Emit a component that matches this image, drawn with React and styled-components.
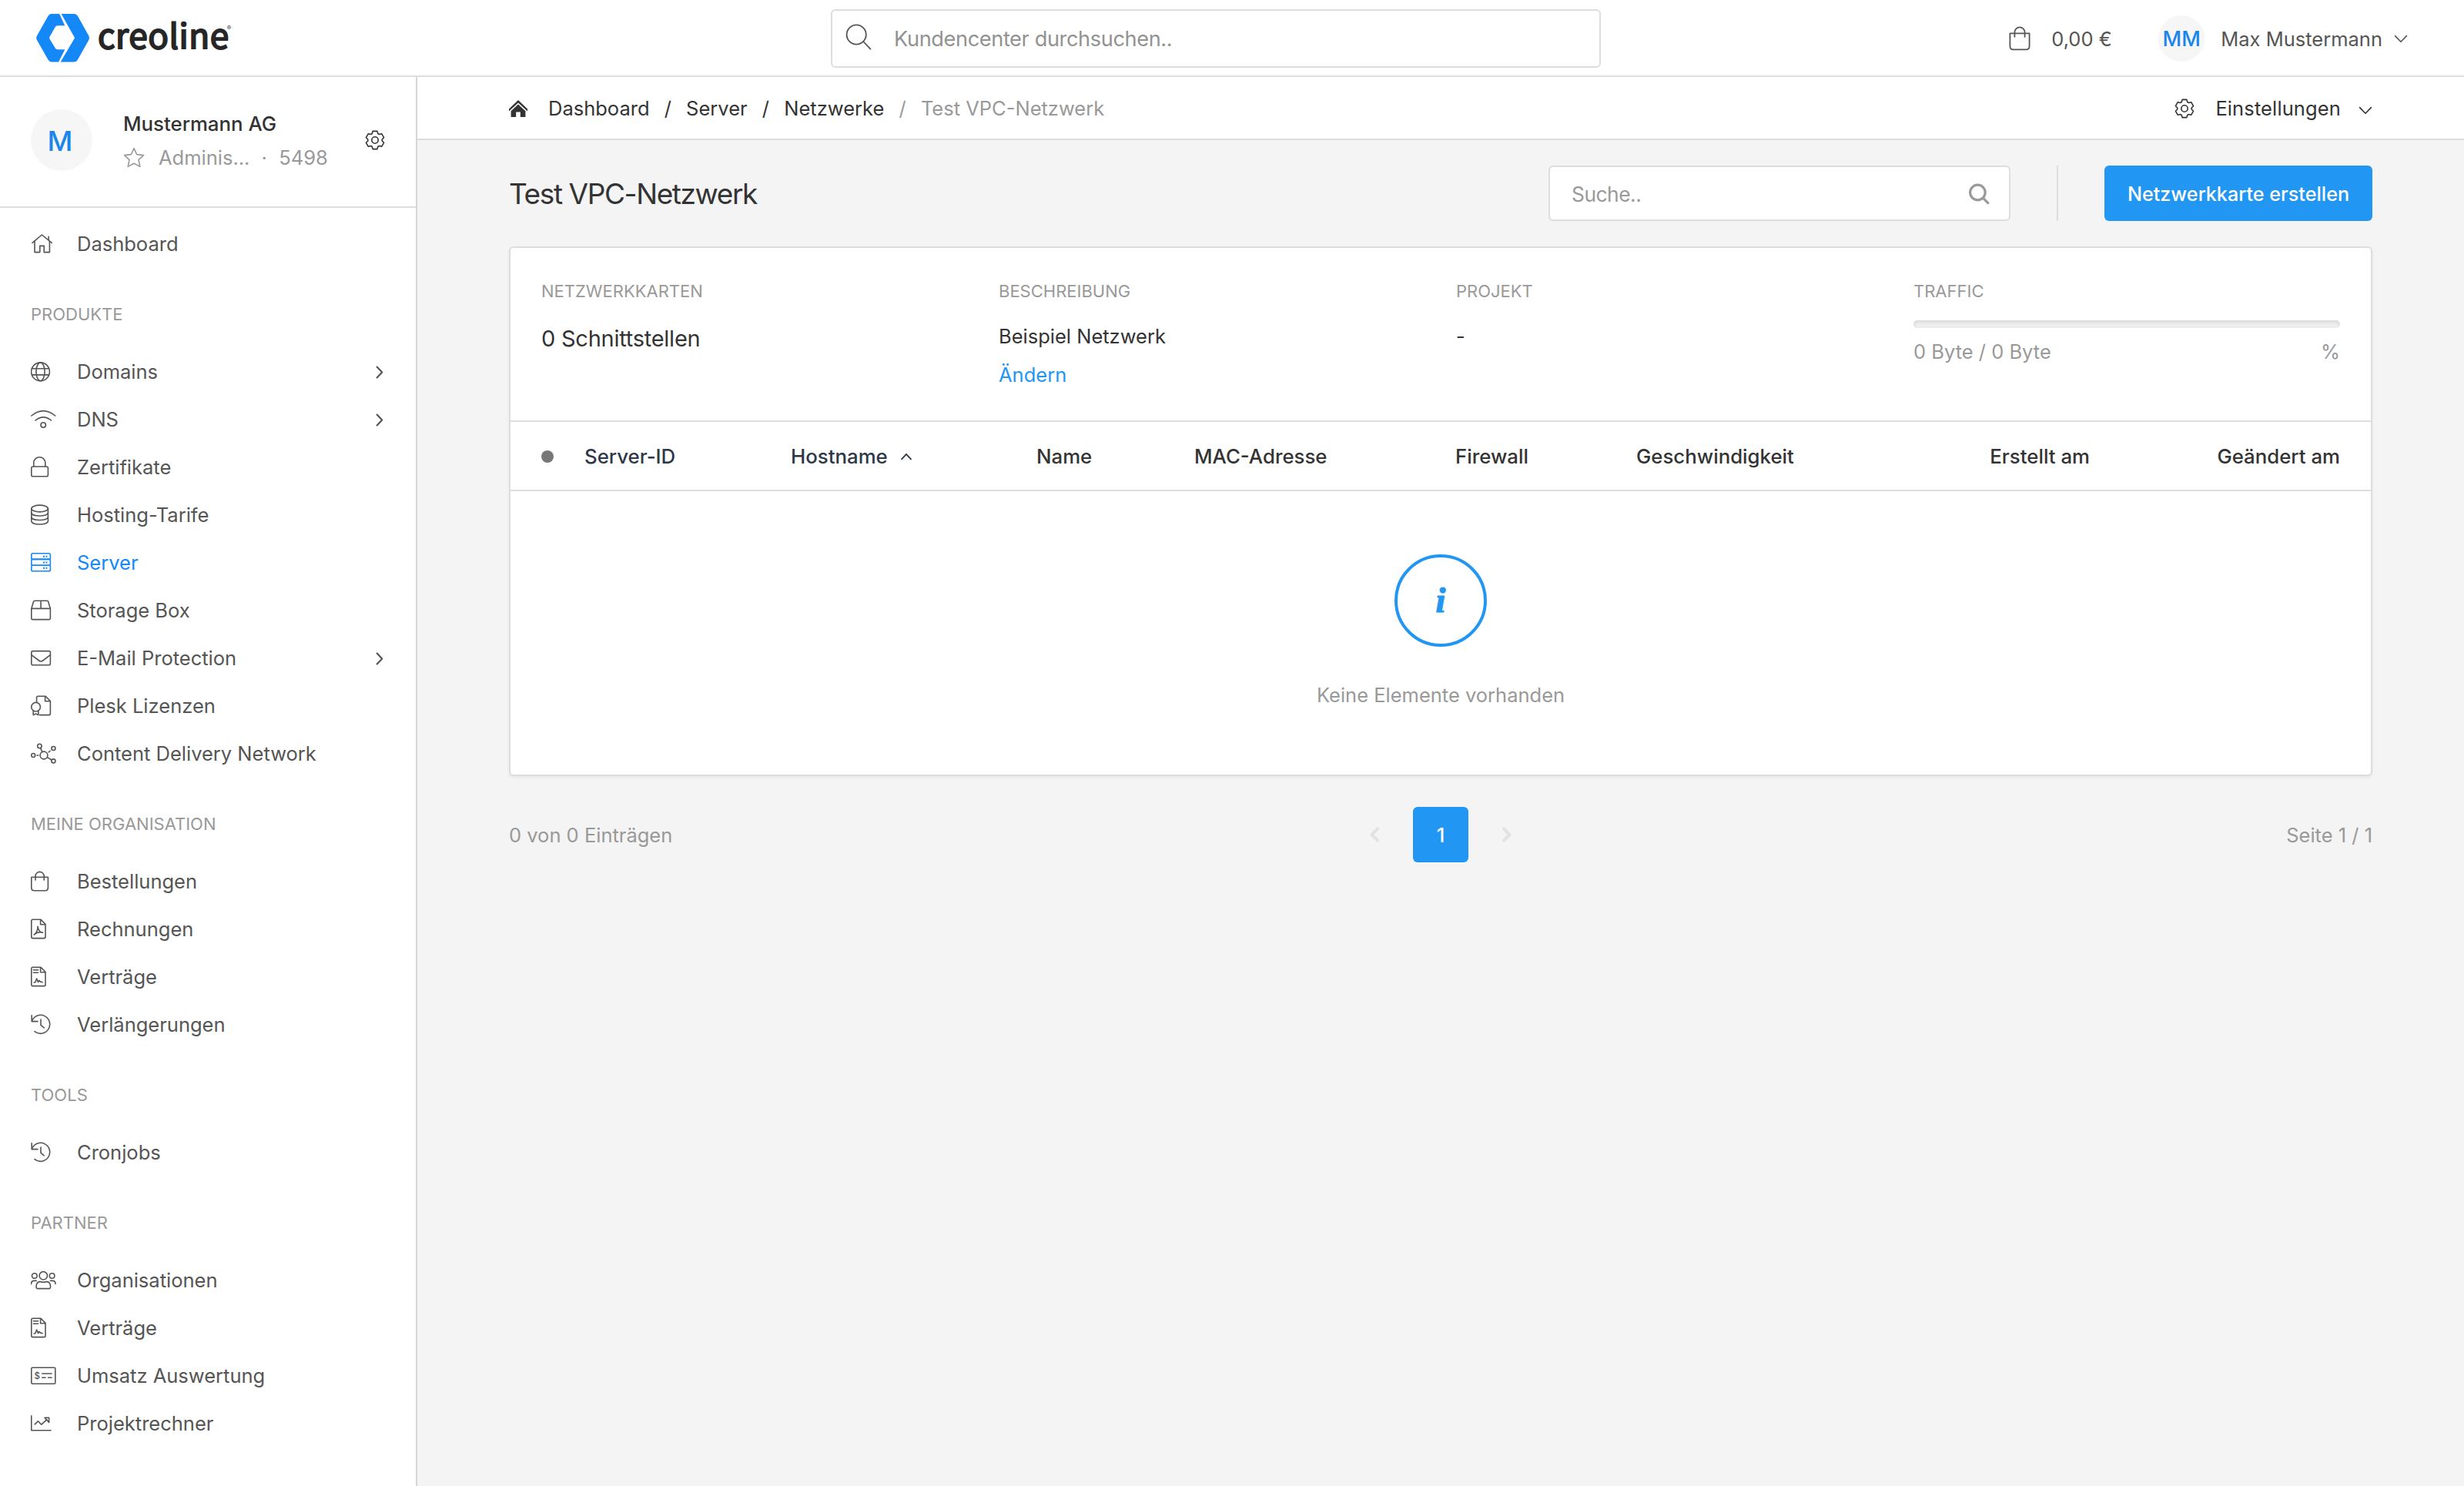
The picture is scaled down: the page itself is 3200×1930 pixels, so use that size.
import styled, { createGlobalStyle } from "styled-components";

const GlobalStyle = createGlobalStyle`
  * {
    box-sizing: border-box;
  }

  body {
    margin: 0;
    background: #f4f4f4;
    color: #333;
    font-family: Inter, "Liberation Sans", sans-serif;
    font-size: 25.5px;
    line-height: 30px;
    -webkit-font-smoothing: antialiased;
  }

  h1,
  h2,
  p {
    margin: 0;
    font-weight: 400;
  }
`;

// outline of a six-tooth gear around (13, 13)
const gear = Array.from({ length: 6 }, (_, tooth) =>
  [
    [-24, 9.3],
    [-14, 12],
    [14, 12],
    [24, 9.3],
  ]
    .map(([offset, r]) => {
      const a = ((tooth * 60 - 90 + offset) * Math.PI) / 180;
      return `${(13 + r * Math.cos(a)).toFixed(2)} ${(13 + r * Math.sin(a)).toFixed(2)}`;
    })
    .join(" L")
).join(" L");

const icons = {
  home: (
    <>
      <path d="M2 12.4 L14.4 2 L27.2 12.4" />
      <path d="M5 10.4 V24.6 H11.8 V16.4 H17.2 V24.6 H24.4 V10.4 M23.2 8.6 V4.4" />
    </>
  ),
  globe: (
    <>
      <circle cx="12.5" cy="13.8" r="11.9" />
      <ellipse cx="12.5" cy="13.8" rx="5.6" ry="11.9" />
      <path d="M1.4 9.8 H23.6 M1.4 17.9 H23.6" />
    </>
  ),
  wifi: (
    <>
      <path d="M.8 9 Q16.2 -3.8 31.8 9 M6 15 Q16.2 6.6 26.6 15" />
      <circle cx="16.2" cy="21" r="3.2" />
    </>
  ),
  lock: (
    <>
      <rect x=".8" y="13" width="21.6" height="12.8" rx="2" />
      <path d="M3.8 13 V8 a7.5 7.2 0 0 1 15 0 V13" />
    </>
  ),
  database: (
    <>
      <ellipse cx="11.6" cy="5.5" rx="10.8" ry="4.4" />
      <path d="M.8 5.5 V21.8 C.8 27.4 22.4 27.4 22.4 21.8 V5.5" />
      <path d="M.8 11 C.8 16.4 22.4 16.4 22.4 11 M.8 16.4 C.8 21.8 22.4 21.8 22.4 16.4" />
    </>
  ),
  server: (
    <>
      <rect x=".8" y="1.8" width="24.6" height="7.6" rx="1.8" />
      <rect x=".8" y="9.4" width="24.6" height="7.8" rx="1.8" />
      <rect x=".8" y="17.2" width="24.6" height="7.6" rx="1.8" />
      <path
        strokeWidth="2"
        strokeLinecap="butt"
        d="M16 5.8 h2 M19.4 5.8 h2 M16 13.4 h2 M19.4 13.4 h2 M16 20.8 h2 M19.4 20.8 h2"
      />
    </>
  ),
  box: (
    <path d="M.8 11.4 H25.4 V24 q0 1.6 -1.6 1.6 H2.4 q-1.6 0 -1.6 -1.6 V11.4 L3.6 2.2 q.3 -1 1.4 -1 H21.2 q1.1 0 1.4 1 L25.4 11.4 M13.1 1.2 V11.4" />
  ),
  mail: (
    <>
      <rect x=".8" y="4.6" width="24.6" height="18.2" rx="2" />
      <path d="M.8 9.6 L10.6 17 q2.5 1.9 5 0 L25.4 9.6" />
    </>
  ),
  license: (
    <>
      <path d="M7.6 8.6 V3 q0 -1.8 1.8 -1.8 H19.2 L25.4 7.6 V23.8 q0 1.8 -1.8 1.8 H11.4 M18.6 1.4 V7.8 H25.2" />
      <circle cx="6.6" cy="15.2" r="5.8" />
      <path d="M3.2 20.2 V25.6 L6.5 24 L9.8 25.6 V20.2" />
    </>
  ),
  network: (
    <>
      <circle cx="17" cy="16" r="4.9" />
      <circle cx="11.4" cy="4" r="2.7" />
      <circle cx="29.4" cy="7" r="2.5" />
      <circle cx="3.2" cy="16" r="2.5" />
      <circle cx="29.4" cy="23.4" r="2.5" />
      <path d="M12.6 6.6 L15 11.6 M21.4 18.6 L27 22 M8 16 h1.8 M23.2 11.8 l1.8 -1.4" />
    </>
  ),
  bag: (
    <path d="M.8 8.2 H22.4 V22 q0 3.8 -3.8 3.8 H4.6 q-3.8 0 -3.8 -3.8 Z M6 12 V6.8 a5.6 5.4 0 0 1 11.2 0 V12" />
  ),
  pdf: (
    <>
      <path d="M.8 3 q0 -1.8 1.8 -1.8 H13 L19 7.4 V23.8 q0 1.8 -1.8 1.8 H2.6 q-1.8 0 -1.8 -1.8 Z M12.6 1.4 V7.8 H18.8" />
      <path d="M4.2 21 C7 19.4 9.6 14.4 9 10.4 C9.4 15 12.4 18 15.6 18.2 C11.6 16.8 7.4 18.2 4.2 21 Z" />
    </>
  ),
  contract: (
    <>
      <path d="M.8 3 q0 -1.8 1.8 -1.8 H13 L19 7.4 V23.8 q0 1.8 -1.8 1.8 H2.6 q-1.8 0 -1.8 -1.8 Z M12.6 1.4 V7.8 H18.8" />
      <path d="M3.4 4.8 H9.6 M3.4 8.2 H9.6 M4.2 21 q1.6 .2 2.2 -1.6 l1.2 -3.4 l2 4.6 l1.2 -2.2 q1.2 2.4 4.2 2.2" />
    </>
  ),
  history: (
    <path d="M1.2 1.8 V9.6 H9 M1.4 9.2 A12 12 0 1 1 5 22.6 M13 7 V14.4 L17.2 17.8" />
  ),
  users: (
    <>
      <circle cx="16.3" cy="7.8" r="5.2" />
      <circle cx="4.8" cy="8" r="3.3" />
      <circle cx="27.6" cy="8" r="3.3" />
      <path d="M7 22.6 q0 -7 5 -7 q4.3 1.6 8.6 0 q5 0 5 7 q0 2 -2 2 H9 q-2 0 -2 -2 Z" />
      <path d="M.6 18.6 q0 -4.2 4 -4.2 h2.6 M32 18.6 q0 -4.2 -4 -4.2 h-2.6" />
    </>
  ),
  money: (
    <>
      <rect x=".8" y="3.2" width="31" height="21" rx="1.4" />
      <path d="M14.8 11 H27 M14.8 16.2 h4.2 M22.6 16.2 H27" />
      <text
        x="4.4"
        y="17.6"
        fontSize="11.5"
        fontWeight="500"
        fill="currentColor"
        stroke="none"
      >
        $
      </text>
    </>
  ),
  chart: (
    <path d="M.8 3.8 V22.8 H26 M5.2 14.8 L9.4 10.8 L13.8 15.2 L21 8.6 M18 6.2 H23.6 V12.4 Z" />
  ),
};

const sections = [
  { items: [["home", "Dashboard"]] },
  {
    title: "PRODUKTE",
    items: [
      ["globe", "Domains", true],
      ["wifi", "DNS", true],
      ["lock", "Zertifikate"],
      ["database", "Hosting-Tarife"],
      ["server", "Server"],
      ["box", "Storage Box"],
      ["mail", "E-Mail Protection", true],
      ["license", "Plesk Lizenzen"],
      ["network", "Content Delivery Network"],
    ],
  },
  {
    title: "MEINE ORGANISATION",
    items: [
      ["bag", "Bestellungen"],
      ["pdf", "Rechnungen"],
      ["contract", "Verträge"],
      ["history", "Verlängerungen"],
    ],
  },
  { title: "TOOLS", items: [["history", "Cronjobs"]] },
  {
    title: "PARTNER",
    items: [
      ["users", "Organisationen"],
      ["contract", "Verträge"],
      ["money", "Umsatz Auswertung"],
      ["chart", "Projektrechner"],
    ],
  },
];

function Gear() {
  return (
    <Icon $w={26} $h={26} viewBox="0 0 26 26">
      <path d={`M${gear} Z`} />
      <circle cx="13" cy="13" r="4.2" />
    </Icon>
  );
}

function Chevron() {
  return (
    <Icon $w={18} $h={11} viewBox="0 0 18 11">
      <path d="M1.6 1.6 L9 9.2 L16.4 1.6" />
    </Icon>
  );
}

function App() {
  return (
    <>
      <GlobalStyle />
      <Header>
        <Logo>
          <LogoMark viewBox="0 0 70 65">
            <path d="M19.5 1 H30.1 L37.3 16.3 H27.6 Q25.6 16.3 24.8 18 L17.6 30.6 Q16.9 32.2 17.6 33.8 L24.8 45.6 Q25.6 47.2 27.6 47.2 H37.3 L29.1 63.4 H20 Q17.2 63.4 15.6 60.8 L.8 34.8 Q-.4 32.2 .8 29.8 L15.6 3.6 Q17.2 1 19.5 1 Z" />
            <path d="M32.6 1 H49.4 Q52.4 1 53.8 3.6 L68.4 29.8 Q69.6 32.2 68.4 34.8 L53.8 60.8 Q52.4 63.4 49.4 63.4 H31.6 L50.1 32.2 Z" />
          </LogoMark>
          <LogoText>creoline</LogoText>
          <Registered>®</Registered>
        </Logo>
        <GlobalSearch>
          <Icon $w={34} $h={34} $stroke={1.8} viewBox="0 0 34 34">
            <circle cx="14.2" cy="14" r="12.6" />
            <path d="M23.2 23 L32.4 32.6" />
          </Icon>
          <Placeholder>Kundencenter durchsuchen..</Placeholder>
        </GlobalSearch>
        <Account>
          <Icon $w={28} $h={32} $stroke={1.8} viewBox="0 0 28 32">
            <path d="M1.4 9.4 H26.6 V26 q0 4.4 -4.4 4.4 H5.8 q-4.4 0 -4.4 -4.4 Z M7.4 13.8 V7.8 a6.6 6.4 0 0 1 13.2 0 V13.8" />
          </Icon>
          <Balance>0,00 €</Balance>
          <Initials>MM</Initials>
          <UserName>Max Mustermann</UserName>
          <Chevron />
        </Account>
      </Header>
      <Body>
        <Sidebar>
          <Organisation>
            <OrgAvatar>M</OrgAvatar>
            <OrgInfo>
              <OrgName>Mustermann AG</OrgName>
              <OrgMeta>
                <Icon $w={28} $h={28} viewBox="0 0 28 28">
                  <path d="M14 1.6 L17.7 9.6 L26.4 10.6 L20 16.6 L21.8 25.4 L14 21.2 L6.2 25.4 L8 16.6 L1.6 10.6 L10.3 9.6 Z" />
                </Icon>
                <OrgRole>Adminis...</OrgRole>
                <OrgDot>·</OrgDot>
                5498
              </OrgMeta>
            </OrgInfo>
            <Gear />
          </Organisation>
          <nav>
            {sections.map((section) => (
              <div key={section.title || "start"}>
                {section.title && <NavTitle>{section.title}</NavTitle>}
                {section.items.map(([icon, label, more]) => (
                  <NavItem key={label} $active={label === "Server"}>
                    <Icon $w={34} $h={28} viewBox="0 0 34 28">
                      {icons[icon]}
                    </Icon>
                    <NavLabel>{label}</NavLabel>
                    {more && (
                      <Icon $w={10} $h={17} $stroke={2.2} viewBox="0 0 10 17">
                        <path d="M1.6 1.6 L8.2 8.5 L1.6 15.4" />
                      </Icon>
                    )}
                  </NavItem>
                ))}
              </div>
            ))}
          </nav>
        </Sidebar>
        <Main>
          <Breadcrumbs>
            <HomeIcon viewBox="0 0 24 22">
              <path d="M12 0 L24 11.4 V14.6 L12 3.4 L0 14.6 V11.4 Z" />
              <path d="M12 5.6 L21.4 14.2 V22 H14.8 V15.4 H9.2 V22 H2.6 V14.2 Z" />
            </HomeIcon>
            <Crumb>Dashboard</Crumb>
            <Slash>/</Slash>
            <Crumb>Server</Crumb>
            <Slash>/</Slash>
            <Crumb>Netzwerke</Crumb>
            <Slash $muted>/</Slash>
            <Crumb $muted>Test VPC-Netzwerk</Crumb>
            <Settings>
              <Gear />
              <SettingsLabel>Einstellungen</SettingsLabel>
              <Chevron />
            </Settings>
          </Breadcrumbs>
          <Content>
            <PageHead>
              <Title>Test VPC-Netzwerk</Title>
              <ListSearch>
                Suche..
                <Icon $w={28} $h={28} $stroke={3.2} viewBox="0 0 28 28">
                  <circle cx="12.4" cy="12" r="9.8" />
                  <path d="M19.8 19.6 L25.8 25.6" />
                </Icon>
              </ListSearch>
              <Divider />
              <CreateButton>Netzwerkkarte erstellen</CreateButton>
            </PageHead>
            <Card>
              <Summary>
                <div>
                  <Label>NETZWERKKARTEN</Label>
                  <Count>0 Schnittstellen</Count>
                </div>
                <div>
                  <Label>BESCHREIBUNG</Label>
                  <Value>Beispiel Netzwerk</Value>
                  <ChangeLink>Ändern</ChangeLink>
                </div>
                <div>
                  <Label>PROJEKT</Label>
                  <Value>-</Value>
                </div>
                <div>
                  <Label>TRAFFIC</Label>
                  <TrafficBar />
                  <TrafficText>
                    <span>0 Byte / 0 Byte</span>
                    <span>%</span>
                  </TrafficText>
                </div>
              </Summary>
              <TableHead>
                <StatusDot />
                <HeadCell $sortable>Server-ID</HeadCell>
                <HeadCell $sortable>
                  Hostname
                  <Icon $w={16} $h={10} $stroke={1.8} viewBox="0 0 16 10">
                    <path d="M2 8.4 L8 1.8 L14 8.4" />
                  </Icon>
                </HeadCell>
                <HeadCell>Name</HeadCell>
                <HeadCell>MAC-Adresse</HeadCell>
                <HeadCell>Firewall</HeadCell>
                <HeadCell>Geschwindigkeit</HeadCell>
                <HeadCell $right>Erstellt am</HeadCell>
                <HeadCell $right>Geändert am</HeadCell>
              </TableHead>
              <Empty>
                <InfoCircle>i</InfoCircle>
                <EmptyText>Keine Elemente vorhanden</EmptyText>
              </Empty>
            </Card>
            <Footer>
              <PageInfo>0 von 0 Einträgen</PageInfo>
              <Pager>
                <Icon $w={14} $h={22} $stroke={4} viewBox="0 0 14 22">
                  <path d="M11 3.4 L3.6 11 L11 18.6" />
                </Icon>
                <Page>1</Page>
                <Icon $w={14} $h={22} $stroke={4} viewBox="0 0 14 22">
                  <path d="M3 3.4 L10.4 11 L3 18.6" />
                </Icon>
              </Pager>
              <PageInfo $right>Seite 1 / 1</PageInfo>
            </Footer>
          </Content>
        </Main>
      </Body>
    </>
  );
}

export default App;

const Icon = styled.svg`
  flex: none;
  width: ${(p) => p.$w}px;
  height: ${(p) => p.$h}px;
  fill: none;
  stroke: currentColor;
  stroke-width: ${(p) => p.$stroke || 1.6};
  stroke-linecap: round;
  stroke-linejoin: round;
`;

const Header = styled.header`
  display: grid;
  grid-template-columns: 1079px 1000px 1fr;
  align-items: center;
  height: 100px;
  padding-top: 2px;
  background: #fff;
  border-bottom: 2px solid #ddd;
`;

const Logo = styled.div`
  display: flex;
  align-items: center;
  height: 76px;
  padding-left: 47px;
`;

const LogoMark = styled.svg`
  width: 70px;
  height: 65px;
  margin-bottom: 2px;
  fill: #1588f8;
`;

const LogoText = styled.span`
  margin: 0 0 12px 10px;
  color: #262626;
  font-family: "Noto Sans CJK SC", "Noto Sans", sans-serif;
  font-size: 44px;
  font-weight: 400;
  letter-spacing: 0.6px;
  line-height: 60px;
  -webkit-text-stroke: 2px #262626;
`;

const Registered = styled.span`
  align-self: flex-start;
  margin-top: 18px;
  margin-left: -3px;
  color: #262626;
  font-size: 8px;
  line-height: 12px;
`;

const GlobalSearch = styled.div`
  display: flex;
  align-items: center;
  gap: 29px;
  height: 76px;
  padding-left: 17px;
  border: 2px solid #ddd;
  border-radius: 6px;
  color: #929292;

  svg {
    color: #555;
    margin-bottom: 4px;
  }
`;

const Placeholder = styled.span`
  padding-top: 2px;
  font-size: 27.2px;
  letter-spacing: -0.4px;
`;

const Account = styled.div`
  display: flex;
  align-items: center;
  justify-content: flex-end;
  padding-right: 73px;
  color: #555;
`;

const Balance = styled.span`
  width: 77px;
  margin: 0 62px 0 27px;
  padding-top: 2px;
  white-space: nowrap;
`;

const Initials = styled.div`
  display: flex;
  align-items: center;
  justify-content: center;
  width: 60px;
  height: 60px;
  padding-top: 2px;
  border-radius: 50%;
  background: #f6f6f6;
  color: #1b85ea;
  font-size: 27px;
  font-weight: 500;
`;

const UserName = styled.span`
  margin: 0 15px 0 21px;
  padding-top: 2px;
`;

const Body = styled.div`
  display: flex;
  height: 1830px;
`;

const Sidebar = styled.aside`
  flex: none;
  width: 542px;
  background: #fff;
  border-right: 2px solid #d6d6d6;
  color: #555;
`;

const Organisation = styled.div`
  display: flex;
  align-items: center;
  height: 170px;
  padding: 0 40px 4px;
  border-bottom: 2px solid #ddd;
  color: #333;
`;

const OrgAvatar = styled.div`
  display: flex;
  align-items: center;
  justify-content: center;
  width: 80px;
  height: 80px;
  padding: 2px 4px 0 0;
  border-radius: 50%;
  background: #f6f6f6;
  color: #1b85ea;
  font-size: 36px;
  font-weight: 500;
`;

const OrgInfo = styled.div`
  flex: 1;
  margin-left: 40px;
  padding-top: 2px;
  line-height: 44px;
`;

const OrgName = styled.p`
  font-size: 25.8px;
  font-weight: 500;
`;

const OrgMeta = styled.div`
  display: flex;
  align-items: center;
  color: #999;
`;

const OrgRole = styled.span`
  margin-left: 18px;
`;

const OrgDot = styled.span`
  margin: 0 15.5px 0 15px;
`;

const NavTitle = styled.h2`
  height: 104px;
  padding: 46px 0 0 40px;
  color: #999;
  font-size: 22px;
  line-height: 28px;
`;

const NavItem = styled.div`
  display: flex;
  align-items: center;
  height: 62px;
  padding: 0 42px 0 40px;
  color: ${(p) => (p.$active ? "#1487f9" : "#555")};

  &:first-child {
    margin-top: 16px;
  }
`;

const NavLabel = styled.span`
  flex: 1;
  margin-left: 26px;
`;

const Main = styled.main`
  flex: 1;
`;

const Breadcrumbs = styled.div`
  display: flex;
  align-items: center;
  height: 82px;
  padding: 2px 119px 0;
  background: #fff;
  border-bottom: 2px solid #ddd;
`;

const HomeIcon = styled.svg`
  width: 24px;
  height: 22px;
  margin-right: 27px;
  fill: #333;
`;

const Crumb = styled.span`
  color: ${(p) => (p.$muted ? "#999" : "#333")};
`;

const Slash = styled.span`
  margin: 0 19.2px;
  color: ${(p) => (p.$muted ? "#999" : "#333")};
`;

const Settings = styled.div`
  display: flex;
  align-items: center;
  margin-left: auto;

  svg:last-child {
    margin-top: 4px;
  }
`;

const SettingsLabel = styled.span`
  margin: 0 23px 0 27px;
  letter-spacing: 0.12px;
`;

const Content = styled.div`
  padding: 33px 119px 0;
`;

const PageHead = styled.div`
  display: flex;
  align-items: center;
  height: 72px;
`;

const Title = styled.h1`
  margin-right: auto;
  padding-top: 1px;
  font-size: 37px;
  letter-spacing: -1.4px;
  line-height: normal;
`;

const ListSearch = styled.div`
  display: flex;
  align-items: center;
  justify-content: space-between;
  width: 600px;
  height: 72px;
  padding: 2px 25px 0 28px;
  background: #fff;
  border: 2px solid #ddd;
  border-radius: 6px;
  color: #999;
  font-size: 26.4px;
  letter-spacing: -0.5px;
`;

const Divider = styled.div`
  width: 2px;
  height: 72px;
  margin: 0 60px;
  background: #ddd;
`;

const CreateButton = styled.button`
  width: 348px;
  height: 72px;
  padding: 2px 0 0;
  border: none;
  border-radius: 6px;
  background: #2196f3;
  color: #fff;
  font-family: inherit;
  font-size: 25.2px;
  font-weight: 500;
`;

const Card = styled.section`
  height: 688px;
  margin-top: 33px;
  background: #fff;
  border: 2px solid #ddd;
  border-radius: 6px;
  box-shadow: 0 2px 4px rgba(0, 0, 0, 0.06);
`;

const Summary = styled.div`
  display: grid;
  grid-template-columns: repeat(4, 1fr);
  column-gap: 40px;
  height: 226px;
  padding: 42px 40px 0;
  border-bottom: 2px solid #ddd;
`;

const Label = styled.h2`
  margin-bottom: 20px;
  color: #999;
  font-size: 22px;
  line-height: 28px;
`;

const Count = styled.p`
  font-size: 29px;
  letter-spacing: -0.25px;
  line-height: 56px;
`;

const Value = styled.p`
  line-height: 50px;
`;

const ChangeLink = styled.a`
  color: #2196f3;
  line-height: 50px;
`;

const TrafficBar = styled.div`
  height: 10px;
  margin-top: 24px;
  border-radius: 5px;
  background: #eee;
  box-shadow: inset 0 2px 4px rgba(0, 0, 0, 0.1);
`;

const TrafficText = styled.div`
  display: flex;
  justify-content: space-between;
  margin-top: 11px;
  color: #999;
  line-height: 40px;
`;

const TableHead = styled.div`
  display: grid;
  grid-template-columns: 56px 268px 319px 205px 339px 235px 1fr auto 325px;
  align-items: center;
  height: 90px;
  padding: 2px 40px 0;
  border-bottom: 2px solid #ddd;
  font-size: 25.8px;
`;

const HeadCell = styled.span`
  display: flex;
  align-items: center;
  justify-content: ${(p) => (p.$right ? "flex-end" : "flex-start")};
  gap: 16px;
  color: ${(p) => (p.$sortable ? "#2d3748" : "#333")};
  font-weight: 500;
  white-space: nowrap;
`;

const StatusDot = styled.span`
  width: 16px;
  height: 16px;
  border-radius: 50%;
  background: #777;
`;

const Empty = styled.div`
  display: flex;
  flex-direction: column;
  align-items: center;
  padding-top: 82px;
`;

const InfoCircle = styled.div`
  width: 120px;
  height: 120px;
  border: 4px solid #2196f3;
  border-radius: 50%;
  color: #2196f3;
  font-family: "Liberation Serif", serif;
  font-size: 46px;
  font-style: italic;
  font-weight: 700;
  line-height: 111px;
  text-align: center;
  -webkit-text-stroke: 1.2px #2196f3;
`;

const EmptyText = styled.p`
  margin-top: 38px;
  color: #999;
  line-height: 50px;
`;

const Footer = styled.footer`
  display: grid;
  grid-template-columns: 1fr auto 1fr;
  align-items: center;
  height: 72px;
  margin-top: 40px;
  color: #999;
`;

const Pager = styled.div`
  display: flex;
  align-items: center;
  gap: 43px;

  svg {
    color: #e2e2e2;
  }
`;

const Page = styled.span`
  width: 72px;
  height: 72px;
  border-radius: 6px;
  background: #2196f3;
  color: #fff;
  font-weight: 500;
  line-height: 73px;
  text-align: center;
`;

const PageInfo = styled.span`
  padding-top: 2px;
  text-align: ${(p) => (p.$right ? "right" : "left")};
`;
